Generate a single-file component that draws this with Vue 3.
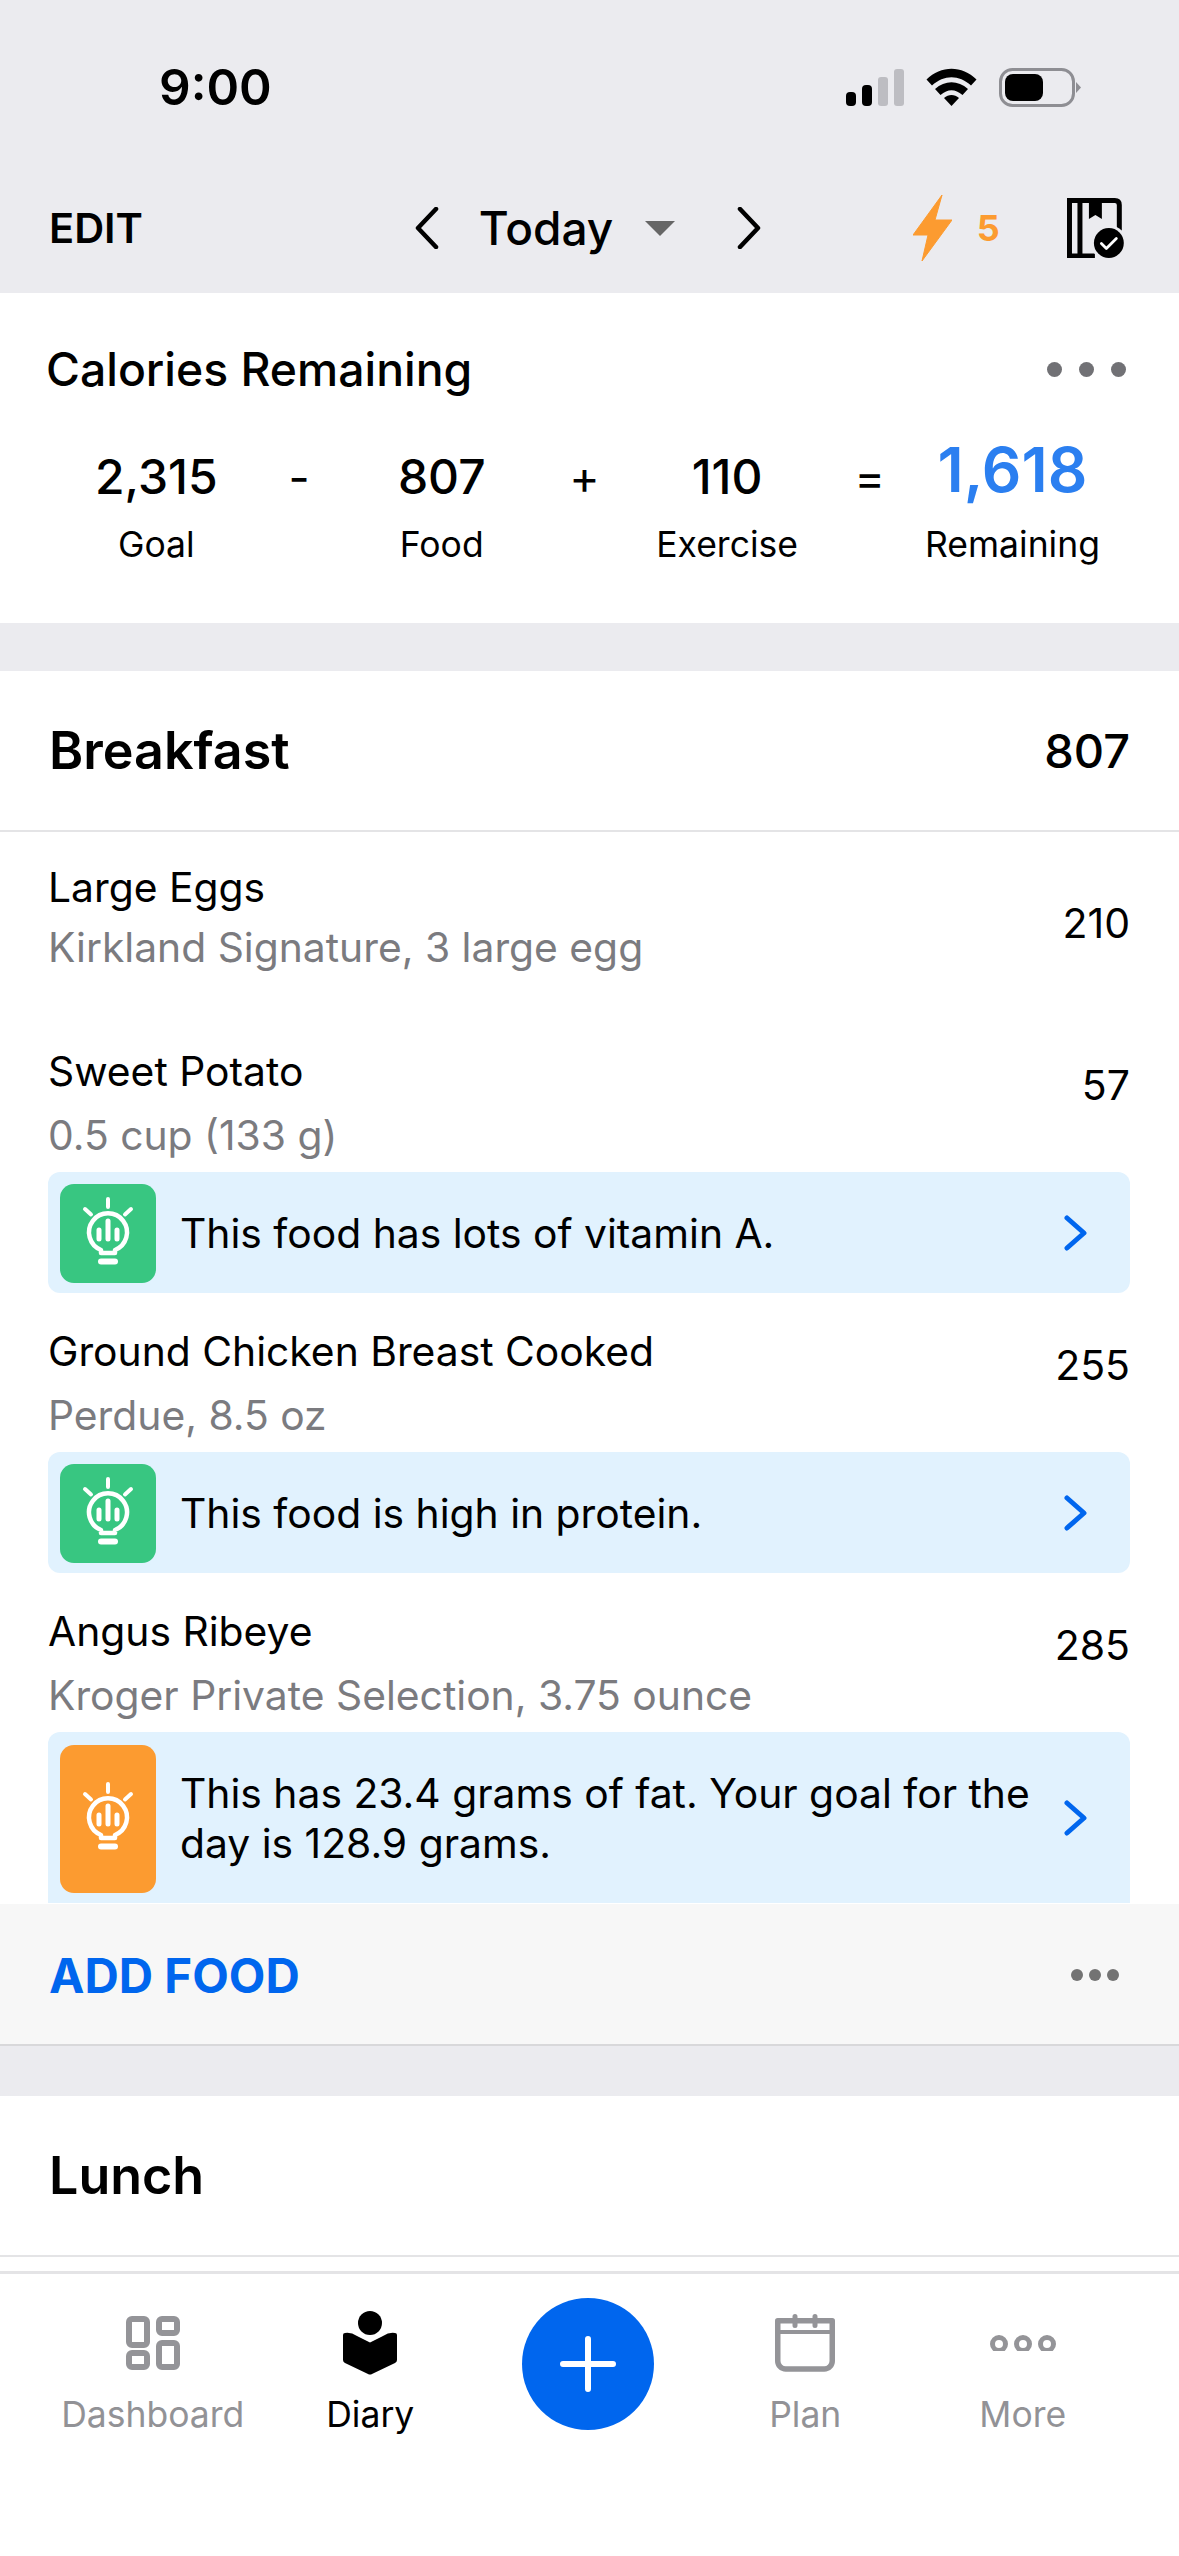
<template>
  <div class="phone">
    <header class="top">
      <div class="status">
        <span class="clock">9:00</span>
        <div class="status-icons">
          <svg class="signal" width="58" height="37" viewBox="0 0 58 37">
            <rect x="0" y="23" width="10" height="14" rx="4" fill="#000" />
            <rect x="16" y="16" width="10" height="21" rx="4" fill="#000" />
            <rect x="32" y="8" width="10" height="29" rx="3" fill="#bdbdc2" />
            <rect x="48" y="0" width="10" height="37" rx="3" fill="#bdbdc2" />
          </svg>
          <svg class="wifi" width="51" height="38" viewBox="0 0 51 38">
            <path d="M0.500 11.500C15 -3 36 -3 50.500 11.500L45 17.500C33 6.500 18 6.500 6 17.500z" fill="#000" />
            <path d="M9 21C19 12 32 12 42 21L36.500 27C29 20.500 22 20.500 14.500 27z" fill="#000" />
            <path d="M18 30C22.500 26 28.500 26 33 30L25.500 38z" fill="#000" />
          </svg>
          <svg class="battery" width="82" height="39" viewBox="0 0 82 39">
            <rect x="1.500" y="1.500" width="73" height="36" rx="12" fill="none" stroke="#8e8e93" stroke-width="3" />
            <rect x="6" y="6" width="38" height="27" rx="8" fill="#000" />
            <path d="M77 14l5 5.500-5 5.500z" fill="#8e8e93" />
          </svg>
        </div>
      </div>
      <div class="nav">
        <span class="edit">EDIT</span>
        <div class="date-nav">
          <svg width="24" height="42" viewBox="0 0 24 42">
            <path d="M21 2 3 21l18 19" fill="none" stroke="#000" stroke-width="4.500" stroke-linecap="round" stroke-linejoin="round" />
          </svg>
          <span class="today">Today</span>
          <span class="caret"></span>
          <svg width="24" height="42" viewBox="0 0 24 42">
            <path d="M3 2l18 19L3 40" fill="none" stroke="#000" stroke-width="4.500" stroke-linecap="round" stroke-linejoin="round" />
          </svg>
        </div>
        <div class="streak">
          <svg width="39" height="66" viewBox="0 0 39 66">
            <path d="M29 0 0 40h15L9 66l30-41H22z" fill="#fc9b30" stroke="#fc9b30" stroke-width="1" stroke-linejoin="round" />
          </svg>
          <span class="streak-num">5</span>
        </div>
        <svg class="book" width="58" height="60" viewBox="0 0 58 60">
          <path d="M0 0h48q7 0 7 7v27H50V7q0-2-2-2H15.500v50.500H28V60H0zM5 5v50.500h5.500V5z" fill="#000" fill-rule="evenodd" />
          <path d="M22 0h13v21l-6.500-4-6.500 4z" fill="#000" />
          <circle cx="42" cy="45" r="18" fill="#ebebef" />
          <circle cx="42" cy="45" r="15" fill="#000" />
          <path d="M34.500 45.500l5 5 10-10" fill="none" stroke="#fff" stroke-width="2.800" stroke-linecap="round" stroke-linejoin="round" />
        </svg>
      </div>
    </header>

    <main class="scroll">
      <section class="summary">
        <div class="summary-head">
          <h2>Calories Remaining</h2>
          <div class="dots-big"><i></i><i></i><i></i></div>
        </div>
        <div class="equation">
          <template v-for="s in stats" :key="s.label">
            <div class="stat">
              <span class="stat-num" :class="{ remain: s.remain }">{{ s.value }}</span>
              <span class="stat-label">{{ s.label }}</span>
            </div>
            <span v-if="s.op" class="op">{{ s.op }}</span>
          </template>
        </div>
      </section>

      <section class="meal">
        <div class="meal-head">
          <h3>Breakfast</h3>
          <span class="meal-cal">807</span>
        </div>
        <div
          v-for="f in foods"
          :key="f.name"
          class="food"
          :class="{ plain: !f.tip, long: f.warn }"
        >
          <div class="food-row">
            <div>
              <div class="food-name">{{ f.name }}</div>
              <div class="food-sub">{{ f.sub }}</div>
            </div>
            <span class="food-cal">{{ f.cal }}</span>
          </div>
          <div v-if="f.tip" class="tip" :class="{ tall: f.warn }">
            <div class="tile" :class="{ orange: f.warn }">
              <svg width="60" height="72" viewBox="0 0 60 72">
                <path d="M23 54a19 19 0 1 1 14 0v3H23z" fill="none" stroke="#fff" stroke-width="4.500" stroke-linejoin="round" />
                <path d="M30 3v8M7 13l6 5.500M53 13l-6 5.500" stroke="#fff" stroke-width="4" stroke-linecap="round" />
                <path d="M21 34v9M30 25v18M39 34v9" stroke="#fff" stroke-width="5" stroke-linecap="round" />
                <path d="M23 65.500h14" stroke="#fff" stroke-width="6" stroke-linecap="round" />
              </svg>
            </div>
            <p class="tip-text">{{ f.tip }}</p>
            <svg class="tip-go" width="26" height="36" viewBox="0 0 26 36">
              <path d="M4 3l17 15L4 33" fill="none" stroke="#0066ee" stroke-width="5" stroke-linecap="round" stroke-linejoin="round" />
            </svg>
          </div>
        </div>
        <div class="add-food">
          <span>ADD FOOD</span>
          <div class="dots-small"><i></i><i></i><i></i></div>
        </div>
      </section>

      <section class="meal lunch">
        <div class="meal-head">
          <h3>Lunch</h3>
        </div>
      </section>
    </main>

    <nav class="tabs">
      <div class="tab">
        <div class="tab-icon">
          <svg width="54" height="54" viewBox="0 0 54 54">
            <g fill="none" stroke="#949498" stroke-width="6">
              <rect x="3" y="3" width="18" height="26" rx="3" />
              <rect x="3" y="37" width="18" height="14" rx="3" />
              <rect x="33" y="3" width="18" height="14" rx="3" />
              <rect x="33" y="27" width="18" height="24" rx="3" />
            </g>
          </svg>
        </div>
        <span>Dashboard</span>
      </div>
      <div class="tab active">
        <div class="tab-icon">
          <svg width="54" height="64" viewBox="0 0 54 64">
            <circle cx="27" cy="12" r="12" fill="#000" />
            <path d="M2 22Q8 21 14 25L27 31.500 40 25Q46 21 52 22 54 22 54 24V49Q54 51 52 52L29 63Q27 64 25 63L2 52Q0 51 0 49V24Q0 22 2 22z" fill="#000" />
          </svg>
        </div>
        <span>Diary</span>
      </div>
      <div class="tab">
        <button class="plus" type="button">
          <svg width="58" height="58" viewBox="0 0 58 58">
            <path d="M29 4v50M4 29h50" stroke="#fff" stroke-width="6" stroke-linecap="round" />
          </svg>
        </button>
      </div>
      <div class="tab">
        <div class="tab-icon">
          <svg width="60" height="58" viewBox="0 0 60 58">
            <path d="M2.750 6.750H57.250V47a8 8 0 0 1-8 8H10.750a8 8 0 0 1-8-8z" fill="none" stroke="#949498" stroke-width="5.500" stroke-linejoin="round" />
            <path d="M2.750 18h54.500" stroke="#949498" stroke-width="4" />
            <path d="M20 2.500v9M40 2.500v9" stroke="#949498" stroke-width="5" stroke-linecap="round" />
          </svg>
        </div>
        <span>Plan</span>
      </div>
      <div class="tab">
        <div class="tab-icon">
          <svg width="66" height="16" viewBox="0 0 66 16">
            <g fill="none" stroke="#949498" stroke-width="5">
              <circle cx="9" cy="9" r="6.500" />
              <circle cx="33" cy="9" r="6.500" />
              <circle cx="57" cy="9" r="6.500" />
            </g>
          </svg>
        </div>
        <span>More</span>
      </div>
    </nav>
  </div>
</template>

<script setup>
const stats = [
  { value: "2,315", label: "Goal", op: "-" },
  { value: "807", label: "Food", op: "+" },
  { value: "110", label: "Exercise", op: "=" },
  { value: "1,618", label: "Remaining", remain: true },
];

const foods = [
  { name: "Large Eggs", sub: "Kirkland Signature, 3 large egg", cal: 210 },
  {
    name: "Sweet Potato",
    sub: "0.5 cup (133 g)",
    cal: 57,
    tip: "This food has lots of vitamin A.",
  },
  {
    name: "Ground Chicken Breast Cooked",
    sub: "Perdue, 8.5 oz",
    cal: 255,
    tip: "This food is high in protein.",
  },
  {
    name: "Angus Ribeye",
    sub: "Kroger Private Selection, 3.75 ounce",
    cal: 285,
    tip: "This has 23.4 grams of fat. Your goal for the day is 128.9 grams.",
    warn: true,
  },
];
</script>

<style>
html,
body {
  margin: 0;
  background: #fff;
}
</style>

<style scoped>
.phone {
  width: 1179px;
  height: 2556px;
  display: flex;
  flex-direction: column;
  overflow: hidden;
  background: #ebebef;
  color: #000;
  font-family: Inter, "Liberation Sans", sans-serif;
}

.top {
  height: 293px;
  flex: none;
}

.status {
  height: 174px;
  display: flex;
  justify-content: space-between;
  align-items: center;
  padding: 0 98px 0 159px;
  box-sizing: border-box;
}

.clock {
  font-size: 49.500px;
  font-weight: 600;
}

.status-icons {
  display: flex;
  align-items: center;
  gap: 22px;
}

.nav {
  height: 108px;
  display: flex;
  align-items: center;
  padding: 0 54px 0 49px;
}

.edit {
  font-size: 41.500px;
  font-weight: 600;
  width: 367px;
}

.date-nav {
  display: flex;
  align-items: center;
  width: 347px;
}

.today {
  font-size: 46px;
  font-weight: 500;
  margin-left: 40px;
  width: 166px;
}

.caret {
  width: 0;
  height: 0;
  border-left: 15px solid transparent;
  border-right: 15px solid transparent;
  border-top: 15px solid #666;
  margin-right: 62px;
}

.streak {
  display: flex;
  align-items: center;
  gap: 25px;
  margin-left: 152px;
  width: 155px;
}

.streak-num {
  font-size: 36px;
  font-weight: 700;
  color: #fc9b30;
}

.scroll {
  flex: 1;
  min-height: 0;
  overflow: hidden;
}

.summary {
  height: 330px;
  background: #fff;
  box-sizing: border-box;
  padding-top: 48px;
}

.summary-head {
  display: flex;
  justify-content: space-between;
  align-items: center;
  padding: 0 53px 0 46px;
}

.summary-head h2 {
  margin: 0;
  font-size: 46.300px;
  font-weight: 500;
}

.dots-big {
  display: flex;
  gap: 17px;
}

.dots-big i {
  width: 15px;
  height: 15px;
  border-radius: 50%;
  background: #717175;
}

.equation {
  display: grid;
  grid-template-columns: repeat(7, 142.700px);
  padding-left: 85px;
  margin-top: 45px;
  justify-items: center;
  align-items: start;
}

.stat {
  display: flex;
  flex-direction: column;
  align-items: center;
  white-space: nowrap;
}

.stat-num {
  font-size: 48px;
  font-weight: 500;
  height: 70px;
  line-height: 70px;
}

.stat-num.remain {
  font-size: 62px;
  font-weight: 600;
  color: #2b7ff0;
  line-height: 56px;
}

.stat-label {
  font-size: 35.500px;
  line-height: 44px;
  margin-top: 11px;
}

.op {
  font-size: 46px;
  line-height: 70px;
}

.meal {
  margin-top: 48px;
  background: #fff;
}

.meal-head {
  height: 161px;
  box-sizing: border-box;
  border-bottom: 2px solid #e4e4e6;
  display: flex;
  justify-content: space-between;
  align-items: center;
  padding: 0 49px;
}

.meal-head h3 {
  margin: 0;
  font-size: 52px;
  font-weight: 600;
}

.meal-cal {
  font-size: 47px;
  font-weight: 500;
}

.food {
  padding: 0 49px 0 48px;
  height: 280px;
  box-sizing: border-box;
}

.food.plain {
  height: 199px;
}

.food.long {
  height: 313px;
}

.food-row {
  height: 141px;
  display: flex;
  justify-content: space-between;
  align-items: center;
}

.food-name {
  font-size: 40.800px;
  line-height: 50px;
  padding-top: 3px;
}

.food-sub {
  font-size: 40.800px;
  line-height: 50px;
  margin-top: 14px;
  color: #7b7b7f;
}

.food-cal {
  font-size: 41px;
  margin-top: -34px;
}

.plain .food-row {
  height: auto;
  align-items: flex-start;
  padding-top: 27px;
}

.plain .food-sub {
  margin-top: 10px;
}

.plain .food-cal {
  margin-top: 39px;
}

.tip {
  height: 121px;
  background: #e1f2fe;
  border-radius: 12px;
  display: flex;
  align-items: center;
  padding: 0 41px 0 12px;
}

.tip.tall {
  height: 171px;
  border-radius: 12px 12px 0 0;
}

.tile {
  width: 96px;
  height: 99px;
  flex: none;
  margin-top: 2px;
  border-radius: 14px;
  background: #38c681;
  display: flex;
  align-items: center;
  justify-content: center;
}

.tile svg {
  margin-bottom: 4px;
}

.tile.orange {
  height: 148px;
  background: #fc9b30;
}

.tip-text {
  flex: 1;
  margin: 0 0 0 24px;
  font-size: 40.800px;
  line-height: 50px;
}

.tip-go {
  flex: none;
  margin-left: 20px;
}

.add-food {
  height: 142px;
  box-sizing: border-box;
  background: #f7f7f7;
  border-bottom: 2px solid #d8d8da;
  display: flex;
  justify-content: space-between;
  align-items: center;
  padding: 2px 60px 0 49px;
  font-size: 47.500px;
  font-weight: 700;
  color: #0066ee;
}

.dots-small {
  display: flex;
  gap: 6px;
}

.dots-small i {
  width: 12px;
  height: 12px;
  border-radius: 50%;
  background: #737373;
}

.lunch {
  margin-top: 50px;
  padding-bottom: 20px;
}

.tabs {
  height: 285px;
  flex: none;
  box-sizing: border-box;
  border-top: 3px solid #e4e4e6;
  background: #fff;
  display: grid;
  grid-template-columns: repeat(5, 217.500px);
  padding: 33px 44px 0;
  align-items: start;
}

.tab {
  display: flex;
  flex-direction: column;
  align-items: center;
  gap: 11px;
  font-size: 35.500px;
  line-height: 50px;
  color: #929296;
}

.tab.active {
  color: #000;
}

.tab-icon {
  height: 72px;
  display: flex;
  align-items: center;
  justify-content: center;
}

.plus {
  width: 132px;
  height: 132px;
  margin-top: -9px;
  border: none;
  border-radius: 50%;
  background: #0066ee;
  display: flex;
  align-items: center;
  justify-content: center;
  padding: 0;
}
</style>
